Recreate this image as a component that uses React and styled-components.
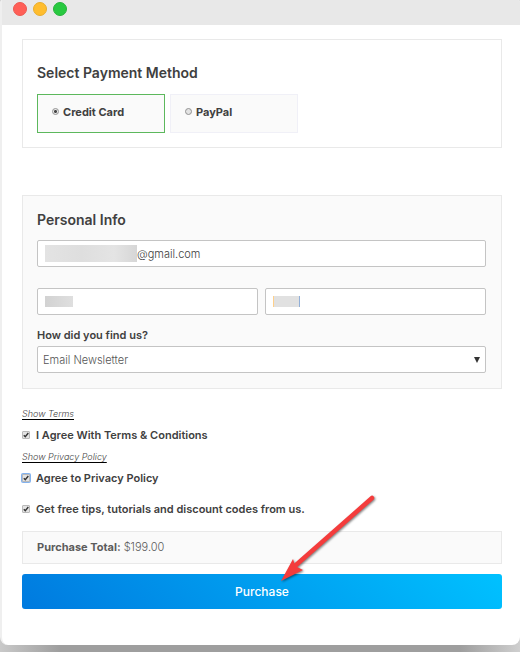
import React, { useState } from "react";
import styled, { createGlobalStyle } from "styled-components";

const GlobalStyle = createGlobalStyle`
  *, *::before, *::after { box-sizing: border-box; }
  body {
    margin: 0;
    min-height: 100vh;
    background: linear-gradient(90deg, #c9c9c9 0, #9e9e9e 60px, #9e9e9e calc(100% - 60px), #cfcfcf 100%);
    color: #404040;
    font-family: Inter, "Open Sans", sans-serif;
    font-size: 11px;
    line-height: 16px;
  }
  button, input, select { font: inherit; color: inherit; }
`;

const Window = styled.div`
  background: #fff;
  border-left: 2px solid #efefef;
  border-radius: 2px 2px 8px 8px;
  overflow: hidden;
`;

const TitleBar = styled.header`
  display: flex;
  gap: 6px;
  height: 25px;
  margin-left: -2px;
  padding: 2px 13px;
  background: #e8e8e8;
`;

const WindowDot = styled.span`
  width: 14px;
  height: 14px;
  border: 1px solid ${(p) => p.$edge};
  border-radius: 50%;
  background: ${(p) => p.$fill};
`;

const Checkout = styled.form`
  display: flex;
  flex-direction: column;
  padding: 14px 18px 36px 20px;
`;

const Panel = styled.section`
  padding: ${(p) => p.$padding};
  border: 1px solid #e9e9e9;
  background: ${(p) => (p.$tinted ? "#fafafa" : "#fff")};
`;

const PersonalPanel = styled(Panel)`
  margin-top: 47px;
`;

const Heading = styled.h2`
  margin: 0 0 ${(p) => p.$gap};
  font-size: 14px;
  line-height: 18px;
  font-weight: 600;
`;

const Methods = styled.div`
  display: flex;
  gap: 5px;
`;

const Method = styled.label`
  display: flex;
  gap: 4px;
  width: 128px;
  height: 39px;
  padding: 9px 14px;
  border: 1px solid ${(p) => (p.$selected ? "#5cb85c" : "#f0f0f7")};
  background: #fafafa;
  font-weight: 700;
`;

const Radio = styled.input`
  appearance: none;
  width: 7px;
  height: 7px;
  margin: 4px 0;
  border: 1px solid #929292;
  border-radius: 50%;
  background: #e3e3e3;
  &:checked { background: radial-gradient(circle, #444 0 1px, #e8e8e8 2px); }
`;

const Field = styled.div`
  display: flex;
  align-items: center;
  flex: 1;
  min-width: 0;
  height: 27px;
  padding: 0 7px;
  border: 1px solid #c4c4c4;
  border-radius: 2px;
  background: #fff;
`;

const Redaction = styled.span`
  flex: none;
  width: ${(p) => p.$width};
  height: ${(p) => p.$height};
  background: ${(p) => p.$fill};
`;

const TextInput = styled.input`
  flex: 1;
  min-width: 0;
  padding: 0;
  border: 0;
  outline: 0;
  background: transparent;
  font-size: 11px;
  font-weight: 300;
`;

const NameRow = styled.div`
  display: flex;
  gap: 7px;
  margin: 21px 0 12px;
`;

const SelectLabel = styled.label`
  display: block;
  margin-bottom: 3px;
  font-weight: 600;
`;

const SelectBox = styled.div`
  display: grid;
  align-items: center;
  > * { grid-area: 1 / 1; }
`;

const Select = styled.select`
  appearance: none;
  width: 100%;
  height: 27px;
  padding: 0 20px 0 5px;
  border: 1px solid #c4c4c4;
  border-radius: 2px;
  background: #fff;
  color: #555;
  font-size: 11px;
  font-weight: 300;
`;

const Caret = styled.svg`
  justify-self: end;
  width: 6px;
  height: 6px;
  margin-right: 6px;
  pointer-events: none;
`;

const Agreements = styled.div`
  display: flex;
  flex-direction: column;
  align-items: flex-start;
  padding: 17px 0 14px;
`;

const TermsLink = styled.a`
  margin-bottom: 5px;
  color: #444;
  font-size: 9px;
  font-style: italic;
  font-weight: 300;
  text-decoration: underline;
  text-decoration-color: #000;
  text-underline-offset: 2px;
`;

const CheckLabel = styled.label`
  display: flex;
  align-items: center;
  gap: 6px;
  margin-bottom: ${(p) => p.$gap || "0"};
  font-weight: 600;
`;

const Checkbox = styled.input`
  appearance: none;
  width: 8px;
  height: 8px;
  margin: 0;
  border: 1px solid #b9b9b9;
  border-radius: 1px;
  background: #e3e3e3;
  box-shadow: ${(p) => (p.$highlighted ? "0 0 0 1px #83b2ee" : "none")};
`;

const CheckSlot = styled.span`
  display: grid;
  place-items: center;
  > * { grid-area: 1 / 1; }
`;

const Tick = styled.svg`
  z-index: 1;
  width: 6px;
  height: 6px;
  pointer-events: none;
`;

const Summary = styled.div`
  position: relative;
  display: flex;
  flex-direction: column;
  gap: 10px;
`;

const Total = styled(Panel)`
  height: 33px;
  color: #5c5c5c;
  line-height: 15px;
`;

const Amount = styled.span`
  font-weight: 300;
`;

const PurchaseButton = styled.button`
  height: 35px;
  border: 0;
  border-radius: 3px;
  background: linear-gradient(45deg, #007adf, #00c1ff);
  color: #fff;
  font-size: 12px;
  font-weight: 500;
`;

const Pointer = styled.svg`
  position: absolute;
  top: -37px;
  left: calc(50% + 18px);
  width: 98px;
  height: 92px;
  pointer-events: none;
  filter: drop-shadow(1px 1px 1px rgba(0, 0, 0, 0.5));
`;

const dots = [
  { fill: "#ff5f57", edge: "#ed5850" },
  { fill: "#ffbd2e", edge: "#e9ad2c" },
  { fill: "#28c940", edge: "#27b33b" },
];

function CheckRow({ children, gap, highlighted }) {
  const [checked, setChecked] = useState(true);
  return (
    <CheckLabel $gap={gap}>
      <CheckSlot>
        <Checkbox
          type="checkbox"
          checked={checked}
          onChange={(e) => setChecked(e.target.checked)}
          $highlighted={highlighted}
        />
        {checked && (
          <Tick viewBox="0 0 6 6" aria-hidden="true">
            <path d="M.8 3.2 2.3 4.8 5.3 1" fill="none" stroke="#333" strokeWidth="1.4" />
          </Tick>
        )}
      </CheckSlot>
      {children}
    </CheckLabel>
  );
}

export default function App() {
  const [method, setMethod] = useState("Credit Card");
  return (
    <>
      <GlobalStyle />
      <Window>
        <TitleBar>
          {dots.map((d) => (
            <WindowDot key={d.fill} $fill={d.fill} $edge={d.edge} />
          ))}
        </TitleBar>
        <Checkout onSubmit={(e) => e.preventDefault()}>
          <Panel $padding="24px 14px 14px">
            <Heading $gap="12px">Select Payment Method</Heading>
            <Methods>
              {["Credit Card", "PayPal"].map((name) => (
                <Method key={name} $selected={method === name}>
                  <Radio
                    type="radio"
                    name="method"
                    checked={method === name}
                    onChange={() => setMethod(name)}
                  />
                  {name}
                </Method>
              ))}
            </Methods>
          </Panel>

          <PersonalPanel $tinted $padding="15px 15px 15px 14px">
            <Heading $gap="11px">Personal Info</Heading>
            <Field>
              <Redaction $width="92px" $height="17px" $fill="linear-gradient(90deg, #e3e3e3, #dedede 40%, #e4e4e4 75%, #d6d6d6)" />
              <TextInput aria-label="Email" defaultValue="@gmail.com" />
            </Field>
            <NameRow>
              <Field>
                <Redaction $width="28px" $height="11px" $fill="linear-gradient(90deg, #d2d2d2, #dfdfdf)" />
                <TextInput aria-label="First name" />
              </Field>
              <Field>
                <Redaction $width="27px" $height="11px" $fill="linear-gradient(90deg, #ffd08a 1px, #e1e1e1 1px 26px, #91afd8 26px)" />
                <TextInput aria-label="Last name" />
              </Field>
            </NameRow>
            <SelectLabel htmlFor="source">How did you find us?</SelectLabel>
            <SelectBox>
              <Select id="source">
                <option>Email Newsletter</option>
              </Select>
              <Caret viewBox="0 0 6 6" aria-hidden="true">
                <path d="M0 0h6L3 6z" fill="#333" />
              </Caret>
            </SelectBox>
          </PersonalPanel>

          <Agreements>
            <TermsLink href="#terms">Show Terms</TermsLink>
            <CheckRow gap="6px">I Agree With Terms &amp; Conditions</CheckRow>
            <TermsLink href="#privacy">Show Privacy Policy</TermsLink>
            <CheckRow gap="15px" highlighted>Agree to Privacy Policy</CheckRow>
            <CheckRow>Get free tips, tutorials and discount codes from us.</CheckRow>
          </Agreements>

          <Summary>
            <Total $tinted $padding="8px 14px">
              <strong>Purchase Total:</strong> <Amount>$199.00</Amount>
            </Total>
            <PurchaseButton type="submit">Purchase</PurchaseButton>
            <Pointer viewBox="0 0 98 92" aria-hidden="true">
              <path d="M92 4 16 71" stroke="#f43c3c" strokeWidth="4.5" strokeLinecap="round" />
              <path d="M1 87 13 65 15 71 17 73 23 76z" fill="#f43c3c" />
            </Pointer>
          </Summary>
        </Checkout>
      </Window>
    </>
  );
}
